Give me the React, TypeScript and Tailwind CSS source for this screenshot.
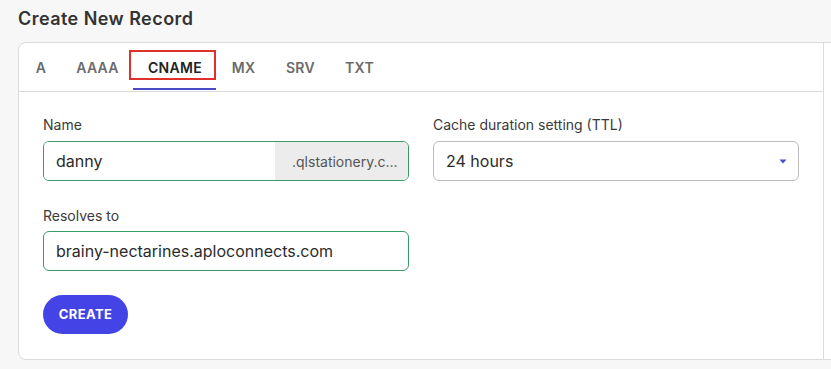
import { useState } from "react";

const tabs = [
  { label: "A", width: "w-[42px]" },
  { label: "AAAA", width: "w-[71px]" },
  { label: "CNAME", width: "w-[84px]" },
  { label: "MX", width: "w-[53px]" },
  { label: "SRV", width: "w-[61px]" },
  { label: "TXT", width: "w-[57px]" },
];

const sans = "font-['Inter','Liberation_Sans',sans-serif]";

export default function App() {
  const [active, setActive] = useState("CNAME");
  const [name, setName] = useState("danny");
  const [target, setTarget] = useState("brainy-nectarines.aploconnects.com");

  return (
    <div className={`w-[831px] h-[369px] overflow-hidden bg-[#f7f7f7] pl-[18px] ${sans}`}>
      {/* Title */}
      <h1 className="pt-[5px] mb-[9px] text-[18px] leading-7 font-semibold tracking-[0.45px] text-[#333333]">
        Create New Record
      </h1>

      {/* Card */}
      <div className="flex w-[840px] h-[318px] bg-white border border-[#dcdcdc] rounded-lg">
        <div className="w-[805px] border-r border-[#dcdcdc] flex flex-col">
          {/* Tabs */}
          <div className="flex h-[49px] border-b border-[#dcdcdc]">
            {tabs.map((tab) => {
              const isActive = tab.label === active;
              return (
                <button
                  key={tab.label}
                  onClick={() => setActive(tab.label)}
                  className={`relative ${tab.width} h-12 flex items-center justify-center pl-[2px] text-[14px] font-semibold tracking-[0.3px] ${
                    isActive ? "text-[#222222]" : "text-[#6b6b6b]"
                  }`}
                >
                  {tab.label}
                  {isActive && (
                    <>
                      <span className="absolute left-[1px] right-0 bottom-[1px] h-[2px] bg-[#4b4bc8]" />
                      <span className="absolute left-[-3px] top-[7px] w-[87px] h-[30px] border-2 border-[#e0302a]" />
                    </>
                  )}
                </button>
              );
            })}
          </div>

          {/* Form */}
          <div className="px-6 pt-[23px]">
            <div className="grid grid-cols-2 gap-x-6">
              <div>
                <label className="block text-[14px] leading-5 text-[#3a3a3a]">Name</label>
                <div className="mt-[6px] flex h-10 border border-[#3c9a68] rounded-md overflow-hidden">
                  <input
                    value={name}
                    onChange={(e) => setName(e.target.value)}
                    className="flex-1 min-w-0 px-3 text-[16px] text-[#2b2b2b] outline-none bg-white"
                  />
                  <div className="w-[133px] bg-[#ececec] flex items-center pl-[17px] text-[14px] text-[#555555] whitespace-nowrap">
                    .qlstationery.c...
                  </div>
                </div>
              </div>
              <div>
                <label className="block text-[14px] leading-5 text-[#3a3a3a]">Cache duration setting (TTL)</label>
                <div className="mt-[6px] flex items-center justify-between h-10 border border-[#bdbdbd] rounded-md pl-3 pr-[11px]">
                  <span className="text-[16px] text-[#2b2b2b]">24 hours</span>
                  <svg width="8" height="5" viewBox="0 0 8 5" className="mt-px">
                    <path d="M0.5 0.5h7L4 4.5z" fill="#4a4ad0" />
                  </svg>
                </div>
              </div>
            </div>

            <div className="grid grid-cols-2 gap-x-6 mt-[25px]">
              <div>
                <label className="block text-[14px] leading-5 text-[#3a3a3a]">Resolves to</label>
                <input
                  value={target}
                  onChange={(e) => setTarget(e.target.value)}
                  className="mt-[5px] w-full h-10 px-3 border border-[#3c9a68] rounded-md text-[16px] text-[#2b2b2b] outline-none"
                />
              </div>
            </div>

            <button className="mt-[24px] w-[85px] h-[39px] rounded-full bg-[#4444e6] text-white text-[13px] font-bold tracking-[0.4px]">
              CREATE
            </button>
          </div>
        </div>
      </div>
    </div>
  );
}
